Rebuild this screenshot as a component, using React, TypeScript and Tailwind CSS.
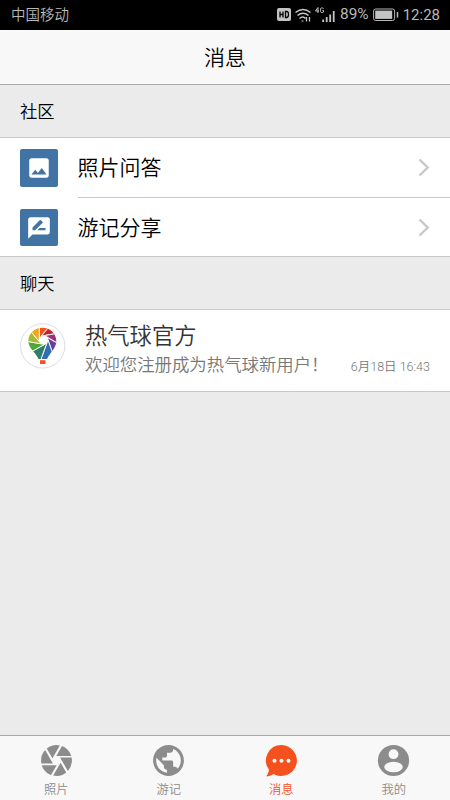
import React from 'react';
import { MdCamera, MdImage, MdPublic, MdRateReview } from 'react-icons/md';

const sections = [
  { icon: MdImage, label: '照片问答' },
  { icon: MdRateReview, label: '游记分享' },
];

// Balloon blades, clockwise from the top
const blades = ['#f0531c', '#c8202f', '#a0307a', '#6a3f9c', '#2f6db5', '#2c7f6a', '#4fa63a', '#a5bd2c', '#f2a51e'];

const Chevron = () => (
  <svg width="12" height="20" viewBox="0 0 12 20" fill="none" stroke="#c7c7c7" strokeWidth="2.4">
    <path d="M1.5 1.5L9.7 9.5L1.5 17.5" />
  </svg>
);

const ChatIcon = () => (
  <svg width="37" height="37" viewBox="0 0 37 37">
    <path fill="#f4511e" d="M18.5 3A15.5 15.5 0 1 1 10.6 31.9C8.4 33.4 6 34.2 3.2 34.2C4.8 32.4 5.7 30.4 5.9 27.6A15.5 15.5 0 0 1 18.5 3Z" />
    <circle cx="11.5" cy="18.7" r="2" fill="#fff" />
    <circle cx="18.5" cy="18.7" r="2" fill="#fff" />
    <circle cx="25.5" cy="18.7" r="2" fill="#fff" />
  </svg>
);

const ProfileIcon = () => (
  <svg width="37" height="37" viewBox="0 0 37 37">
    <circle cx="18.5" cy="18.5" r="15.6" fill="currentColor" />
    <circle cx="18.5" cy="12.2" r="4.9" fill="#f8f8f8" />
    <ellipse cx="18.5" cy="25" rx="9.3" ry="5.2" fill="#f8f8f8" />
  </svg>
);

const Balloon = () => (
  <svg width="46" height="46" viewBox="0 0 46 46">
    <defs>
      <clipPath id="balloon">
        <path d="M22.3 4.8C30.5 4.8 36.3 11 36.3 18C36.3 25 30.5 29 27 36H18.5C15.5 29 8.3 25 8.3 18C8.3 11 14.5 4.8 22.3 4.8Z" />
      </clipPath>
    </defs>
    <circle cx="22.7" cy="22.9" r="22.2" fill="#fff" stroke="#dcdce6" />
    <g clipPath="url(#balloon)">
      {blades.map((color, i) => (
        <path
          key={color}
          d="M-4.2 -1.3V-31L16.9 -26.4L-2.4 -3.7Z"
          fill={color}
          stroke="#fff"
          strokeWidth="0.9"
          transform={`translate(23.5 17) rotate(${i * 40})`}
        />
      ))}
    </g>
    <path d="M20 37.2h5.5v3.8h-5.5z" fill="#f0531c" />
  </svg>
);

const StatusBar = () => (
  <div className="h-[30px] shrink-0 bg-black text-[#b8b8b8] flex items-center justify-between pl-[11px] pr-[10px]">
    <span className="pt-[3px] text-[14.5px] leading-none font-[350]">中国移动</span>
    <div className="flex items-center">
      <svg width="60" height="18" viewBox="0 0 60 18" fill="none" stroke="#c4c4c4">
        <rect x="0" y="2" width="14" height="13" rx="2" fill="#c4c4c4" stroke="none" />
        <path d="M3 5.5v6M6 5.5v6M3 8.5h3M8.5 5.5v6h1q2 0 2-3t-2-3z" stroke="#000" strokeWidth="1.3" />
        <path d="M18.5 6.5q7.5-6 15 0M20.5 9.5q5.5-4.5 11 0M22.5 12.5q3.5-3 6 0" strokeWidth="1.6" />
        <path d="M25.5 14.5v1" strokeWidth="2" />
        <path d="M29.5 11v4.500M32.500 11v4.500" strokeWidth="1.3" />
        <path d="M41 7V1.500l-2.500 3.500h3.500M46.500 2.500q-3-2-3 1.700t3 1.800V4.500h-1" strokeWidth="1" />
        <path d="M46.200 16v-2.500M49.700 16v-5M53.200 16V8.500M56.700 16V5" strokeWidth="1.8" />
      </svg>
      <span className="ml-[3px] text-[15.4px] leading-none">89%</span>
      <svg className="ml-[4px]" width="26" height="14" viewBox="0 0 26 14">
        <rect x="0.6" y="1" width="21" height="11.5" rx="2" fill="none" stroke="#b8b8b8" />
        <rect x="2.2" y="2.6" width="17" height="8.3" fill="#c4c4c4" />
        <path d="M24.5 4v5.5" stroke="#b8b8b8" strokeWidth="1.5" />
      </svg>
      <span className="ml-[4px] pt-px text-[15px] leading-none">12:28</span>
    </div>
  </div>
);

const tabs = [
  { icon: MdCamera, label: '照片' },
  { icon: MdPublic, label: '游记' },
  { icon: ChatIcon, label: '消息', active: true },
  { icon: ProfileIcon, label: '我的' },
];

const App = () => {
  return (
    <div className="w-[450px] h-[800px] flex flex-col overflow-hidden bg-[#ebebeb] font-['Roboto','Noto_Sans_CJK_SC',sans-serif]">
      <StatusBar />

      <header className="h-[55px] shrink-0 bg-[#f8f8f8] border-b border-[#aaaaaa] flex items-center justify-center">
        <h1 className="pt-[2px] text-[21px] leading-none font-[350] text-black">消息</h1>
      </header>

      <h2 className="h-[52px] shrink-0 flex items-center pl-5 pt-[3px] text-[17.3px] font-[350] text-black">社区</h2>
      <div className="h-[120px] shrink-0 bg-white border-y border-[#c9c9c9]">
        {sections.map(({ icon: Icon, label }, index) => (
          <div key={label} className={`flex items-center pl-5 ${index === 0 ? 'h-[60px]' : 'h-[59px]'}`}>
            <div className="w-[37.5px] h-[37.5px] rounded-[2px] bg-[#4173a4] flex items-center justify-center">
              <Icon size={26} color="#fff" />
            </div>
            <div className={`ml-5 h-full flex-1 flex items-center justify-between pr-5 ${index === 0 ? 'border-b border-[#c9c9c9]' : ''}`}>
              <span className="pt-px text-[21px] leading-none font-[350] text-black">{label}</span>
              <Chevron />
            </div>
          </div>
        ))}
      </div>

      <h2 className="h-[52px] shrink-0 flex items-center pl-5 pt-[3px] text-[17.3px] font-[350] text-black">聊天</h2>
      <div className="h-[83px] shrink-0 bg-white border-y border-[#c9c9c9] flex items-start pl-5 pr-5">
        <div className="mt-[13px]">
          <Balloon />
        </div>
        <div className="ml-[19px] mt-[12px] flex-1">
          <p className="text-[22.3px] leading-[29px] font-[350] text-[#333]">热气球官方</p>
          <div className="flex justify-between items-center">
            <p className="text-[17.4px] leading-[26px] font-[350] text-[#777] whitespace-nowrap">欢迎您注册成为热气球新用户！</p>
            <span className="pt-[4px] text-[12.5px] leading-[24px] font-[350] text-[#777] whitespace-nowrap">6月18日 16:43</span>
          </div>
        </div>
      </div>

      <nav className="mt-auto h-[65px] shrink-0 bg-[#f8f8f8] border-t border-[#aaaaaa] grid grid-cols-4">
        {tabs.map(({ icon: Icon, label, active }) => (
          <div key={label} className={`flex flex-col items-center pt-[6px] ${active ? 'text-[#f4511e]' : 'text-[#8c8c8c]'}`}>
            <Icon size={37} />
            <span className="pt-[2px] text-[12.3px] leading-[18px] font-[350]">{label}</span>
          </div>
        ))}
      </nav>
    </div>
  );
};

export default App;
